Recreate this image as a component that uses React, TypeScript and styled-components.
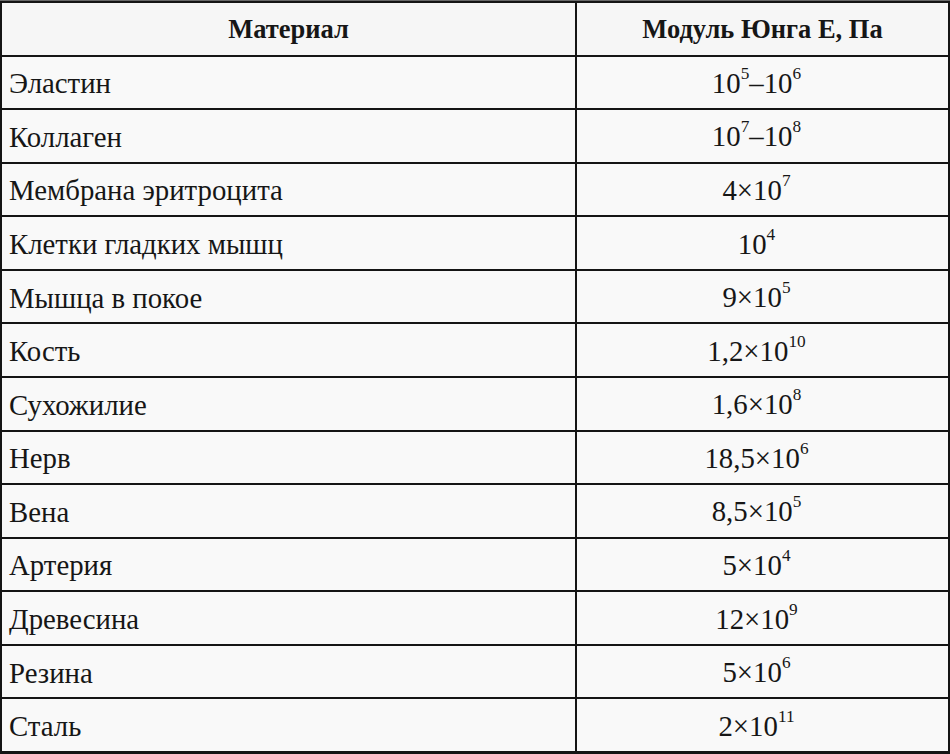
import React from "react";
import styled, { createGlobalStyle } from "styled-components";

const GlobalStyle = createGlobalStyle`
    html, body {
        margin: 0;
        padding: 0;
        background: #ffffff;
    }
`;

interface Row {
    name: string,
    value: React.ReactNode,
}

const Sup = styled.sup`
    font-size: 60%;
    line-height: 0;
    position: relative;
    top: -0.2em;
    vertical-align: super;
`;

// 10 with a raised exponent
const pow = (exp: string) => <>10<Sup>{exp}</Sup></>;

const rows: Row[] = [
    { name: "Эластин", value: <>{pow("5")}–{pow("6")}</> },
    { name: "Коллаген", value: <>{pow("7")}–{pow("8")}</> },
    { name: "Мембрана эритроцита", value: <>4×{pow("7")}</> },
    { name: "Клетки гладких мышц", value: pow("4") },
    { name: "Мышца в покое", value: <>9×{pow("5")}</> },
    { name: "Кость", value: <>1,2×{pow("10")}</> },
    { name: "Сухожилие", value: <>1,6×{pow("8")}</> },
    { name: "Нерв", value: <>18,5×{pow("6")}</> },
    { name: "Вена", value: <>8,5×{pow("5")}</> },
    { name: "Артерия", value: <>5×{pow("4")}</> },
    { name: "Древесина", value: <>12×{pow("9")}</> },
    { name: "Резина", value: <>5×{pow("6")}</> },
    { name: "Сталь", value: <>2×{pow("11")}</> },
];

const Table = styled.div`
    width: 950px;
    height: 754px;
    box-sizing: border-box;
    display: grid;
    grid-template-columns: 573px 1fr;
    grid-template-rows: repeat(14, 1fr);
    gap: 2px;
    padding: 2px 2px 3px 2px;
    background: #151515;
    border-top: 1px solid #6a6a6a;
`;

const Cell = styled.div<{ $head?: boolean, $center?: boolean }>`
    display: flex;
    align-items: center;
    justify-content: ${(p) => (p.$center ? "center" : "flex-start")};
    padding: ${(p) => (p.$center ? "2px 0 0 0" : "3px 0 0 7px")};
    background: ${(p) => (p.$head ? "#f6f6f6" : "#f9f9f9")};
    color: #161616;
    font-family: "Liberation Serif", "DejaVu Serif", serif;
    font-size: ${(p) => (p.$head ? "26.5px" : "28.8px")};
    font-weight: ${(p) => (p.$head ? 700 : 400)};
    white-space: nowrap;
`;

const Value = styled.span`
    position: relative;
    left: -6px;
`;

export default function App() {
    return (
        <>
            <GlobalStyle />
            <Table>
                <Cell $head $center>Материал</Cell>
                <Cell $head $center>Модуль Юнга Е, Па</Cell>
                {rows.map((r) => (
                    <React.Fragment key={r.name}>
                        <Cell>{r.name}</Cell>
                        <Cell $center><Value>{r.value}</Value></Cell>
                    </React.Fragment>
                ))}
            </Table>
        </>
    );
}
